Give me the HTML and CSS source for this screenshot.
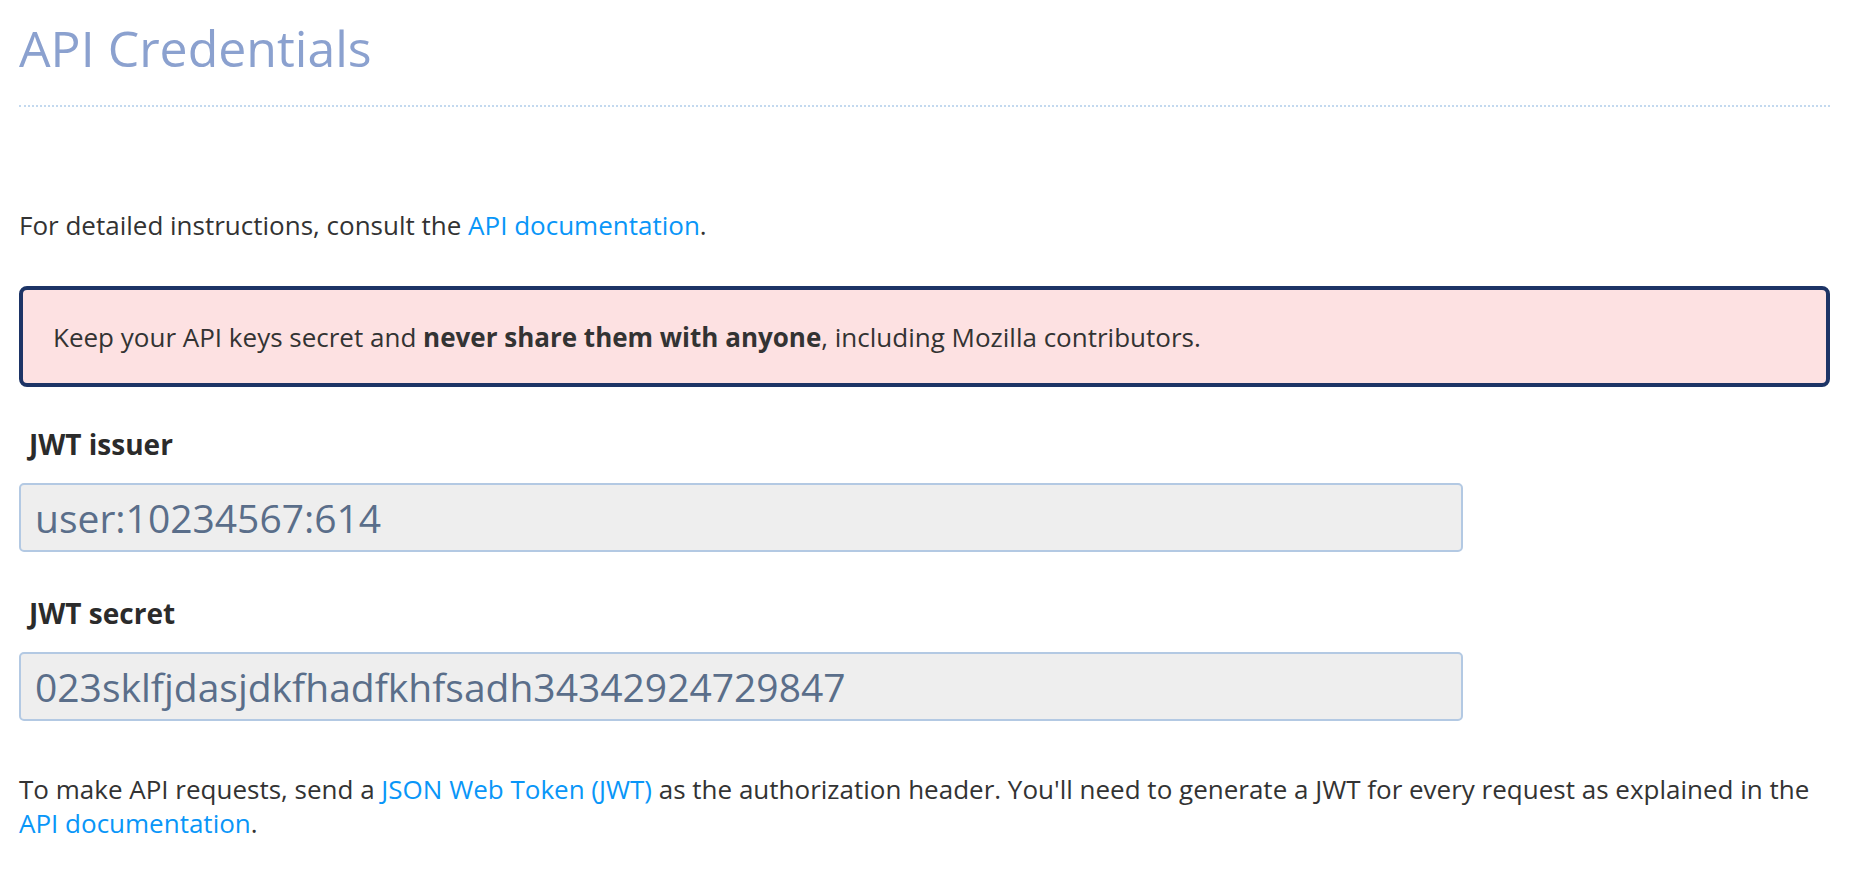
FILE: index.html
```html
<!DOCTYPE html>
<html lang="en">
<head>
<meta charset="utf-8">
<title>API Credentials</title>
<link rel="stylesheet" href="styles.css">
</head>
<body>
<main class="page">
  <header class="page-header">
    <h1 class="page-title">API Credentials</h1>
  </header>
  <p class="intro">For detailed instructions, consult the <a href="#" class="link">API documentation</a>.</p>
  <div class="alert">Keep your API keys secret and <strong>never share them with anyone</strong>, including Mozilla contributors.</div>
  <div class="field">
    <label class="field-label" for="jwt-issuer">JWT issuer</label>
    <input class="field-input" id="jwt-issuer" type="text" readonly value="user:10234567:614">
  </div>
  <div class="field">
    <label class="field-label" for="jwt-secret">JWT secret</label>
    <input class="field-input" id="jwt-secret" type="text" readonly value="023sklfjdasjdkfhadfkhfsadh34342924729847">
  </div>
  <p class="note">To make API requests, send a <a href="#" class="link">JSON Web Token (JWT)</a> as the authorization header. You'll need to generate a JWT for every request as explained in the <a href="#" class="link">API documentation</a>.</p>
</main>
</body>
</html>
```
FILE: styles.css
```css
html, body {
  margin: 0;
  padding: 0;
  background: #ffffff;
}

body {
  font-family: "Open Sans", "Liberation Sans", sans-serif;
  color: #333333;
  font-size: 26px;
  line-height: 34px;
}

.page {
  padding: 14px 36px 40px 19px;
}

.page-header {
  padding-bottom: 23px;
  border-bottom: 2px dotted #c3d9ef;
}

.page-title {
  margin: 0;
  font-size: 50px;
  line-height: 68px;
  font-weight: 400;
  color: #8ba1cf;
}

.intro {
  margin: 101px 0 44px;
}

.link {
  color: #0996f8;
  text-decoration: none;
}

.alert {
  background: #fde1e2;
  border: 4px solid #1d3466;
  border-radius: 8px;
  padding: 30px 30px 29px;
  margin-bottom: 38px;
}

.alert strong {
  font-weight: 700;
}

.field {
  display: flex;
  flex-direction: column;
  align-items: flex-start;
  margin-bottom: 42px;
}

.field-label {
  font-weight: 700;
  font-size: 28px;
  line-height: 38px;
  padding-left: 10px;
  margin-bottom: 20px;
  color: #2b2b2b;
}

.field-input {
  box-sizing: border-box;
  width: 1444px;
  height: 69px;
  padding: 0 14px;
  font-family: "Open Sans", "Liberation Sans", sans-serif;
  font-size: 39px;
  color: #5a6e8a;
  background: #eeeeee;
  border: 2px solid #b3c9e3;
  border-radius: 5px;
  outline: none;
}

.note {
  margin: 51px 0 0;
}
```
